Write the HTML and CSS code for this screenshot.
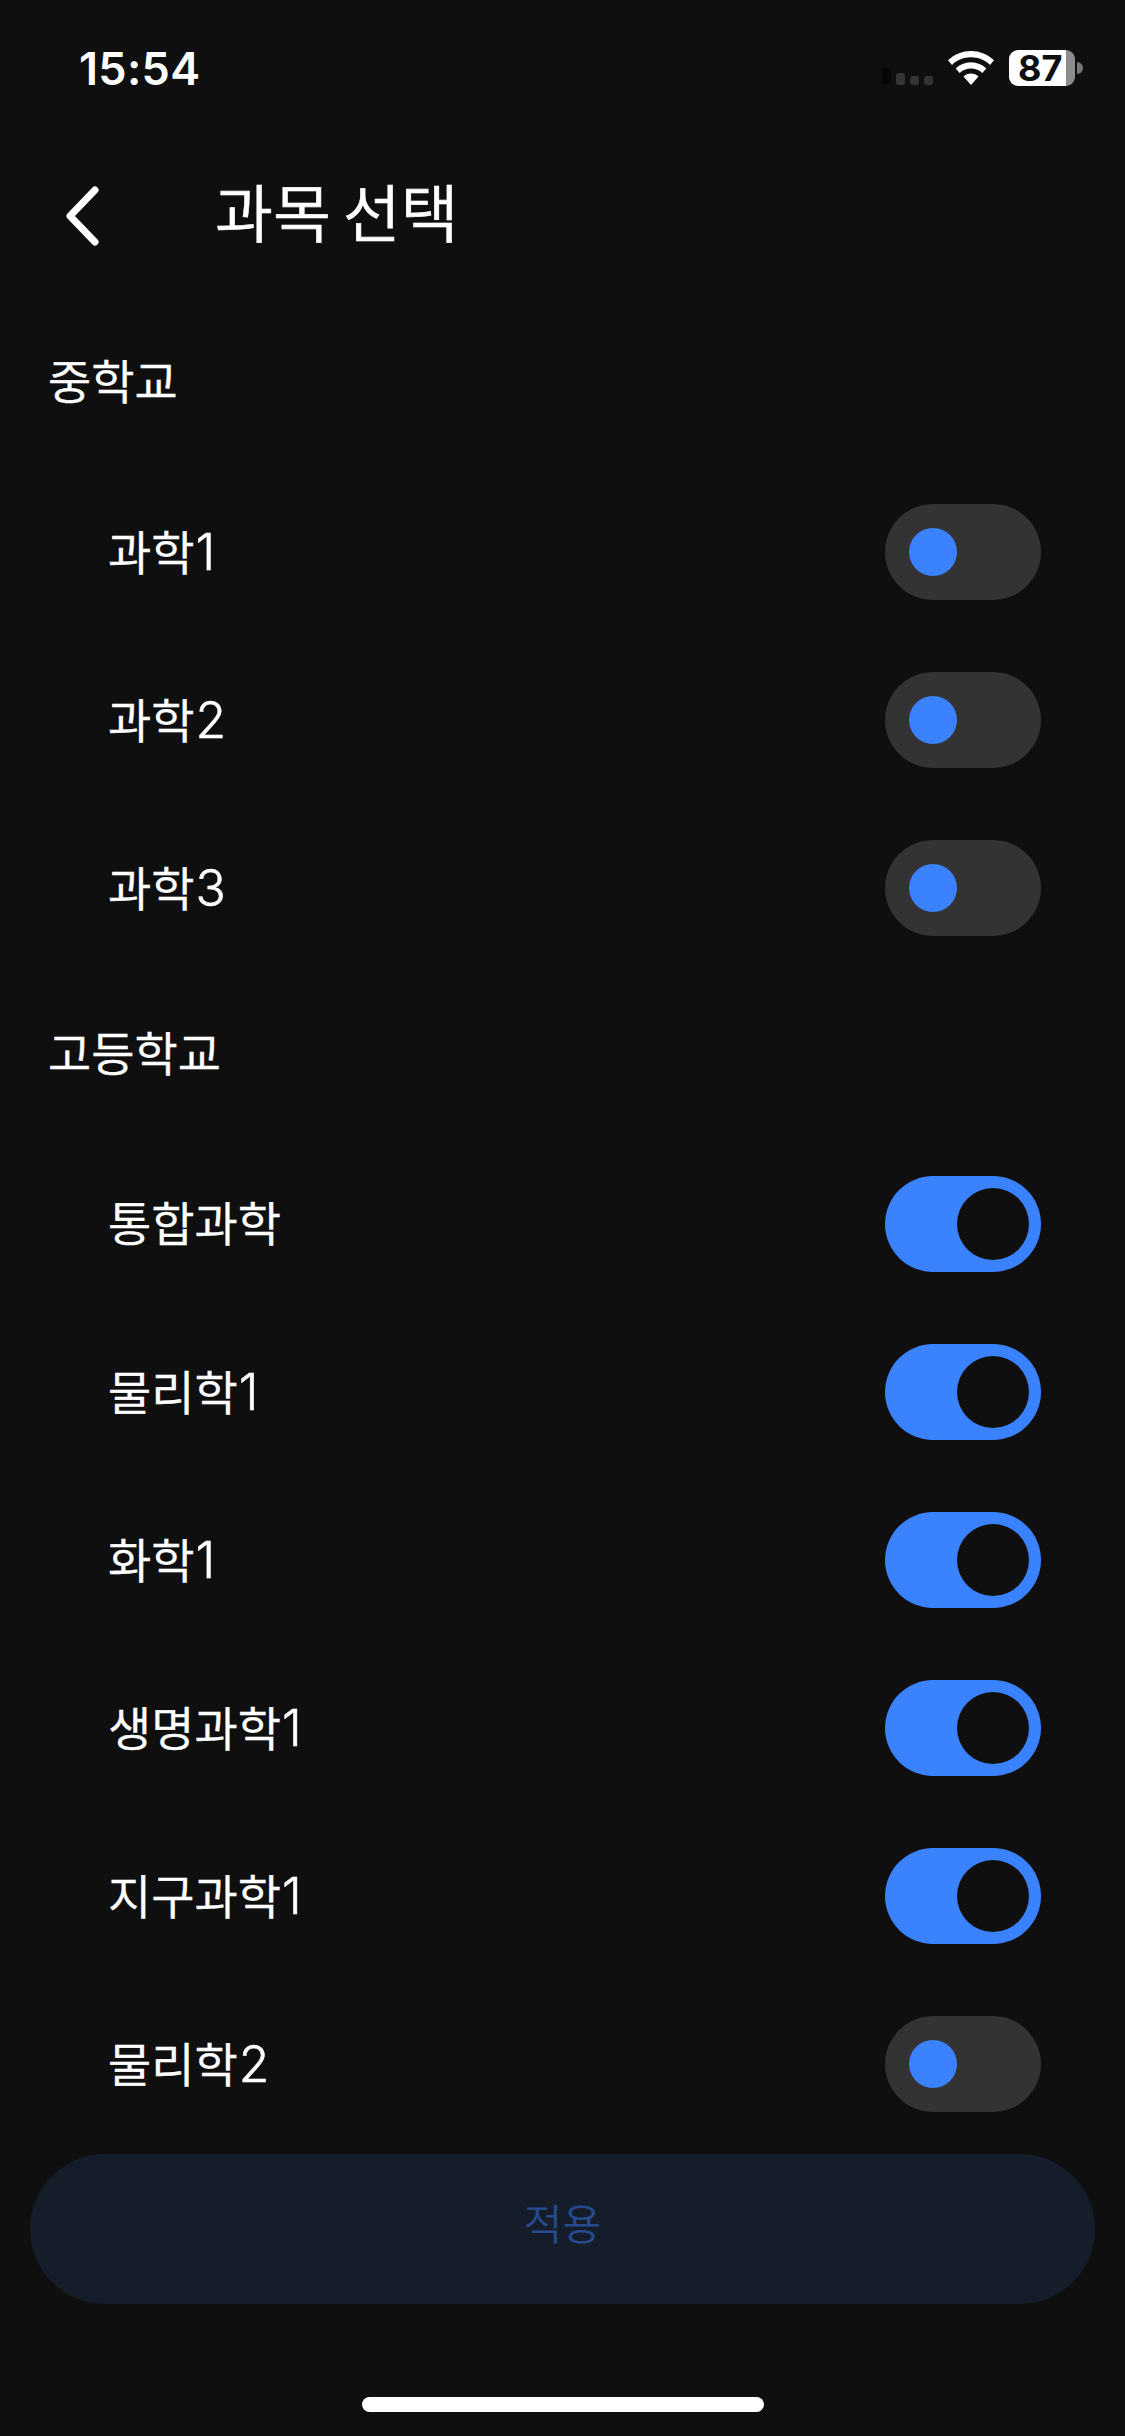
FILE: index.html
```html
<!DOCTYPE html>
<html lang="ko">
<head>
<meta charset="utf-8">
<title>과목 선택</title>
<link rel="stylesheet" href="styles.css">
</head>
<body>
<div class="screen">
  <header class="status">
    <span class="time">15:54</span>
    <div class="status-icons">
      <div class="signal"><i class="b1"></i><i class="b2"></i><i class="b3"></i><i class="b4"></i></div>
      <svg class="wifi" viewBox="0 0 46 34" aria-hidden="true">
        <path d="M23 0C14 0 6.400 3.400 0 9.300l4 4.600C9.300 9 15.700 6.300 23 6.300S36.700 9 42 13.900l4-4.600C39.600 3.400 32 0 23 0z" fill="#fff"/>
        <path d="M23 11.300c-6 0-11.200 2.300-15.300 6.200l4 4.500c3-2.800 6.900-4.500 11.300-4.500s8.300 1.700 11.300 4.500l4-4.500C34.200 13.600 29 11.300 23 11.300z" fill="#fff"/>
        <path d="M23 22.500c-3 0-5.600 1.100-7.500 3L23 34l7.500-8.500c-1.900-1.900-4.500-3-7.500-3z" fill="#fff"/>
      </svg>
      <div class="battery">
        <div class="battery-body"><span class="battery-num">87</span></div>
        <div class="battery-cap"></div>
      </div>
    </div>
  </header>

  <nav class="nav">
    <svg class="back" viewBox="0 0 36 60" aria-hidden="true"><path d="M31 4 6 30l25 26" fill="none" stroke="#fff" stroke-width="7" stroke-linecap="round" stroke-linejoin="round"/></svg>
    <h1 class="title">과목 선택</h1>
  </nav>

  <main class="list">
    <h2 class="section">중학교</h2>
    <div class="row"><span class="label">과학<span class="num">1</span></span><span class="toggle"><span class="knob"></span></span></div>
    <div class="row"><span class="label">과학<span class="num">2</span></span><span class="toggle"><span class="knob"></span></span></div>
    <div class="row"><span class="label">과학<span class="num">3</span></span><span class="toggle"><span class="knob"></span></span></div>
    <h2 class="section">고등학교</h2>
    <div class="row"><span class="label">통합과학</span><span class="toggle on"><span class="knob"></span></span></div>
    <div class="row"><span class="label">물리학<span class="num">1</span></span><span class="toggle on"><span class="knob"></span></span></div>
    <div class="row"><span class="label">화학<span class="num">1</span></span><span class="toggle on"><span class="knob"></span></span></div>
    <div class="row"><span class="label">생명과학<span class="num">1</span></span><span class="toggle on"><span class="knob"></span></span></div>
    <div class="row"><span class="label">지구과학<span class="num">1</span></span><span class="toggle on"><span class="knob"></span></span></div>
    <div class="row"><span class="label">물리학<span class="num">2</span></span><span class="toggle"><span class="knob"></span></span></div>
  </main>

  <div class="action"><button class="apply" type="button">적용</button></div>
  <div class="home-wrap"><div class="home"></div></div>
</div>
</body>
</html>
```
FILE: styles.css
```css
* { box-sizing: border-box; }
html, body { margin: 0; padding: 0; background: #0f0f0f; }
body { font-family: Inter, "Noto Sans CJK KR", sans-serif; font-weight: 350; color: #fff; }
.screen { width: 1125px; height: 2436px; display: flex; flex-direction: column; overflow: hidden; background: #0f0f0f; }

.status { height: 132px; display: flex; align-items: flex-start; justify-content: space-between; padding: 46px 42px 0 79px; flex: none; }
.time { font-family: Inter, "Liberation Sans", sans-serif; font-weight: 600; font-size: 45px; line-height: 46px; letter-spacing: 0.3px; color: #fff; }
.status-icons { display: flex; align-items: flex-start; padding-top: 5px; }
.signal { display: flex; align-items: flex-end; gap: 5px; height: 34px; margin-right: 15px; }
.signal i { display: block; width: 9px; border-radius: 3px; background: #343434; }
.signal .b1 { height: 18px; background: #070707; }
.signal .b2 { height: 12px; }
.signal .b3, .signal .b4 { height: 9px; }
.wifi { width: 46px; height: 34px; margin-right: 15px; display: block; }
.battery { display: flex; align-items: center; margin-top: -1px; }
.battery-body { width: 66px; height: 36px; border-radius: 9px; background: linear-gradient(to right, #fff 57px, #8c8c8c 57px); display: flex; align-items: center; padding-left: 9px; }
.battery-num { font-family: Inter, "Liberation Sans", sans-serif; font-weight: 700; font-size: 36px; line-height: 36px; color: #0f0f0f; }
.battery-cap { width: 6px; height: 12px; margin-left: 2px; border-radius: 0 6px 6px 0; background: #777; }

.nav { height: 168px; display: flex; align-items: center; padding-left: 64px; flex: none; }
.back { width: 36px; height: 60px; display: block; flex: none; }
.title { margin: 0 0 0 115px; padding-bottom: 5px; font-size: 63px; font-weight: 350; line-height: 80px; word-spacing: -6px; color: #fff; -webkit-text-stroke: 0.6px #fff; }

.list { flex: none; }
.section { margin: 0; height: 168px; display: flex; align-items: center; padding: 0 0 12px 48px; font-size: 47px; font-weight: 350; -webkit-text-stroke: 0.5px #fff; }
.row { height: 168px; display: flex; align-items: center; justify-content: space-between; padding: 0 84px 0 108px; }
.label { font-size: 47px; line-height: 60px; color: #fff; -webkit-text-stroke: 0.5px #fff; }
.num { font-size: 50px; margin-left: 1px; }

.toggle { width: 156px; height: 96px; border-radius: 48px; background: #333; display: flex; align-items: center; padding-left: 24px; }
.knob { width: 48px; height: 48px; border-radius: 50%; background: #3b82ff; display: block; }
.toggle.on { background: #3b82ff; padding-left: 72px; }
.toggle.on .knob { width: 72px; height: 72px; background: #0f0f0f; }

.action { padding: 6px 30px 0; flex: none; }
.apply { width: 100%; height: 150px; border: 0; border-radius: 75px; background: #141d29; color: #274a8e; font: 350 42px/60px Inter, "Noto Sans CJK KR", sans-serif; padding: 0 0 8px; display: block; }

.home-wrap { display: flex; justify-content: center; padding-top: 93px; flex: none; }
.home { width: 402px; height: 15px; border-radius: 8px; background: #fff; }
```
